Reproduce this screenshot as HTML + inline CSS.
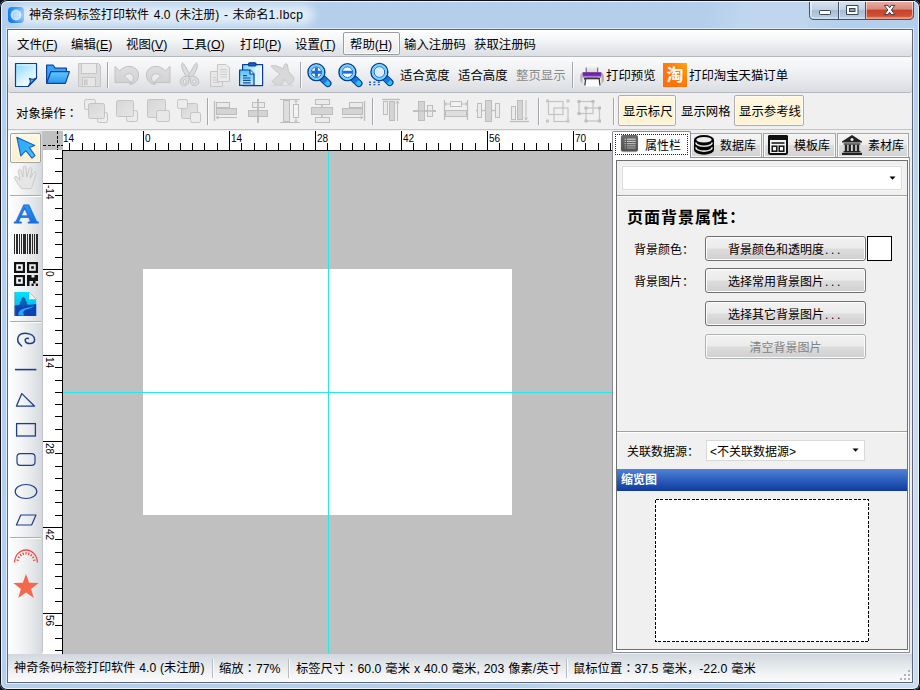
<!DOCTYPE html>
<html lang="zh-CN">
<head>
<meta charset="utf-8">
<title>神奇条码标签打印软件 4.0 (未注册) - 未命名1.lbcp</title>
<style>
*{box-sizing:border-box;margin:0;padding:0}
html,body{width:920px;height:690px;overflow:hidden;background:#0b1322}
body{position:relative;font-family:"Liberation Sans","Noto Sans CJK SC",sans-serif;font-size:12px;color:#000}
.abs,.abs>*{position:absolute}
#win{position:absolute;left:0;top:0;width:920px;height:690px;border-radius:7px;background:#b3cfeb;overflow:hidden;box-shadow:inset 0 0 0 1px #0d1018, inset 0 0 0 2px #eef5fd}
#glass{position:absolute;left:2px;top:2px;width:916px;height:686px;background:linear-gradient(105deg,rgba(255,255,255,0) 0,rgba(255,255,255,0) 64%,rgba(255,255,255,.16) 68%,rgba(255,255,255,.16) 73%,rgba(255,255,255,0) 77%,rgba(255,255,255,0) 84%,rgba(255,255,255,.28) 92%,rgba(255,255,255,.3) 100%)}
#client{position:absolute;left:8px;top:30px;width:904px;height:652px;background:#f0f0f0;box-shadow:0 0 0 1px #5d6877,0 0 0 2px #dbeafa}
.t{position:absolute;white-space:nowrap;line-height:16px;height:16px}
.u{text-decoration:underline}
.serif{font-family:"Liberation Serif","Noto Serif CJK SC",serif}

#menubar{position:absolute;left:0;top:0;width:904px;height:27px;background:linear-gradient(#ffffff 0,#f6f7f8 35%,#e6e8eb 70%,#dcdfe3 100%);border-bottom:1px solid #b4b9c0;border-radius:3px}
#menubar .t{top:7px}
#menubar .t,#tb1 .t,#tb2 .t{font-size:12.4px}
#status .t{font-size:12.3px;word-spacing:.5px;top:6px !important;margin-left:-1px}
#tb1{position:absolute;left:0;top:27px;width:904px;height:36px;background:linear-gradient(#fbfbfc 0,#f0f1f3 40%,#e2e4e8 80%,#d9dce1 100%);border-bottom:1px solid #b4b9c0;border-radius:3px}
#tb2{position:absolute;left:0;top:63px;width:904px;height:37px;background:#f0f0f0;border-bottom:1px solid #c2c5c9}
.sep{position:absolute;width:2px;border-left:1px solid #a3a7ad;border-right:1px solid #fbfbfb}
.tbtn{position:absolute;border:1px solid #adadad;border-radius:2px;background:linear-gradient(#fef7df,#fdf3d2);box-shadow:inset 0 0 0 1px #fffbef}
svg{position:absolute;overflow:visible}
#work{position:absolute;left:0;top:100px;width:904px;height:524px;background:#f0f0f0}
#status{position:absolute;left:0;top:624px;width:904px;height:28px;background:linear-gradient(#d2d8de 0,#e2e6ea 35%,#f2f4f5 72%,#fbfbfc 100%)}
.rl{font-size:10px;line-height:11px;height:11px;font-family:"Liberation Sans",sans-serif}
.rv{transform-origin:0 0;transform:rotate(90deg)}
.pt{font-family:"Liberation Sans","Noto Sans CJK SC",sans-serif;font-size:12px;font-weight:400}
.pbtn{position:absolute;width:161px;height:25px;border:1px solid #707070;border-radius:3px;background:linear-gradient(#f2f2f2 0,#ebebeb 48%,#dddddd 52%,#cfcfcf 100%);box-shadow:inset 0 0 0 1px #fcfcfc;text-align:center;line-height:27px;font-family:"Liberation Sans","Noto Sans CJK SC",sans-serif;font-size:12px;font-weight:400;white-space:nowrap}
.tc{font-family:"Noto Sans CJK TC",sans-serif}
.dots{letter-spacing:2.6px;margin-left:1px}
</style>
</head>
<body>
<div id="win">
<div id="glass"></div>
<!-- TITLE -->
<div id="title" class="abs" style="left:0;top:0;width:920px;height:30px">
  <svg style="left:8px;top:7px" width="16" height="16" viewBox="0 0 16 16"><defs><linearGradient id="ig" x1="0" y1="0" x2="0" y2="1"><stop offset="0" stop-color="#0a86fc"/><stop offset="1" stop-color="#0670ec"/></linearGradient></defs><rect x="0" y="0" width="16" height="16" rx="4" fill="url(#ig)"/><circle cx="8" cy="8" r="5.4" fill="#b4dafd"/><rect x="5" y="4.5" width="1.5" height="7" fill="#8cc4fb"/><rect x="7.3" y="4.5" width="1.5" height="7" fill="#8cc4fb"/><rect x="9.6" y="4.5" width="1.5" height="7" fill="#8cc4fb"/></svg>
  <div style="left:14px;top:5px;width:300px;height:20px;border-radius:10px;background:rgba(255,255,255,.62);filter:blur(5px)"></div>
  <div class="t" id="ttext" style="left:29px;top:7px;word-spacing:1.4px">神奇条码标签打印软件 4.0 (未注册) - 未命名<span style="letter-spacing:.45px">1.lbcp</span></div>
</div>
<div id="client">
<div id="menubar">
  <div class="t" style="left:9px">文件(<span class="u">F</span>)</div>
  <div class="t" style="left:63px">编辑(<span class="u">E</span>)</div>
  <div class="t" style="left:118px">视图(<span class="u">V</span>)</div>
  <div class="t" style="left:174px">工具(<span class="u">O</span>)</div>
  <div class="t" style="left:232px">打印(<span class="u">P</span>)</div>
  <div class="t" style="left:287px">设置(<span class="u">T</span>)</div>
  <div style="position:absolute;left:335px;top:2px;width:57px;height:23px;border:1px solid #9a9da2;border-radius:2px;background:linear-gradient(#fbfbfb,#f3f3f4 50%,#eaebed);box-shadow:inset 0 0 0 1px #fcfcfd"></div>
  <div class="t" style="left:342px">帮助(<span class="u">H</span>)</div>
  <div class="t" style="left:396px">输入注册码</div>
  <div class="t" style="left:466px">获取注册码</div>
</div>
<div id="tb1">
<div class="t" style="left:392px;top:11px">适合宽度</div>
<div class="t" style="left:450px;top:11px">适合高度</div>
<div class="t" style="left:508px;top:11px;color:#8a8a8a">整页显示</div>
<div class="t" style="left:598px;top:11px">打印预览</div>
<div class="t" style="left:681px;top:11px">打印淘宝天猫订单</div>
<div class="sep" style="left:99px;top:5px;height:26px"></div>
<div class="sep" style="left:292px;top:5px;height:26px"></div>
<div class="sep" style="left:564px;top:5px;height:26px"></div>
</div>
<div id="tb2">
<div class="t" style="left:8px;top:12px">对象操作<span class="tc" lang="zh-TW">：</span></div>
<div class="sep" style="left:199px;top:5px;height:27px"></div>
<div class="sep" style="left:364px;top:5px;height:27px"></div>
<div class="sep" style="left:530px;top:5px;height:27px"></div>
<div class="sep" style="left:605px;top:5px;height:27px"></div>
<div class="tbtn" style="left:610px;top:2px;width:58px;height:31px"></div>
<div class="t" style="left:615px;top:11px">显示标尺</div>
<div class="t" style="left:673px;top:11px">显示网格</div>
<div class="tbtn" style="left:726px;top:2px;width:70px;height:31px"></div>
<div class="t" style="left:731px;top:11px">显示参考线</div>
</div>
<div id="work">
<div style="position:absolute;left:0;top:1px;width:35px;height:523px;background:linear-gradient(90deg,#ffffff 0,#f4f5f6 35%,#e3e6e9 75%,#d5d9dd 100%);border-radius:0 0 4px 0;border-right:1px solid #c3c7cc"></div>
<div class="tbtn" style="left:2px;top:3px;width:31px;height:30px;border-color:#a2a2a2;background:linear-gradient(#fef8e2,#fbefcd)"></div>
<div style="position:absolute;left:2px;top:65px;width:31px;height:2px;border-top:1px solid #a9adb2;border-bottom:1px solid #fdfdfd"></div>
<div style="position:absolute;left:2px;top:191px;width:31px;height:2px;border-top:1px solid #a9adb2;border-bottom:1px solid #fdfdfd"></div>
<div style="position:absolute;left:2px;top:407px;width:31px;height:2px;border-top:1px solid #a9adb2;border-bottom:1px solid #fdfdfd"></div>
<div style="position:absolute;left:35px;top:1px;width:20px;height:19px;background:#c0c0c0"></div>
<div style="position:absolute;left:55px;top:1px;width:549px;height:19px;background:#fff"></div>
<div style="position:absolute;left:35px;top:20px;width:19px;height:504px;background:#fff"></div>
<div style="position:absolute;left:54px;top:20px;width:550px;height:504px;background:#c0c0c0;border-left:1px solid #000;border-top:1px solid #000"></div>
<div style="position:absolute;left:135px;top:139px;width:369px;height:246px;background:#fff"></div>
<div style="position:absolute;left:320px;top:21px;width:1px;height:503px;background:#24e8f0"></div>
<div style="position:absolute;left:55px;top:262px;width:549px;height:1px;background:#24e8f0"></div>
<div class="t rl" style="left:55px;top:3px">14</div>
<div class="t rl" style="left:137px;top:3px">0</div>
<div class="t rl" style="left:223px;top:3px">14</div>
<div class="t rl" style="left:309px;top:3px">28</div>
<div class="t rl" style="left:395px;top:3px">42</div>
<div class="t rl" style="left:481px;top:3px">56</div>
<div class="t rl" style="left:567px;top:3px">70</div>
<div class="t rl rv" style="left:47px;top:55px">-14</div>
<div class="t rl rv" style="left:47px;top:141px">0</div>
<div class="t rl rv" style="left:47px;top:227px">14</div>
<div class="t rl rv" style="left:47px;top:313px">28</div>
<div class="t rl rv" style="left:47px;top:399px">42</div>
<div class="t rl rv" style="left:47px;top:485px">56</div>
<div style="position:absolute;left:604px;top:27px;width:298px;height:496px;border:1px solid #898c95;background:#fff"></div>
<div style="position:absolute;left:608px;top:30px;width:292px;height:490px;border:1px solid #6f6f6f;background:#f0f0f0"></div>
<div style="position:absolute;left:682px;top:3px;width:72px;height:24px;border:1px solid #a3a6ad;border-bottom:none;background:linear-gradient(#f4f4f4,#ebebeb 50%,#dddddd 50%,#d3d3d3);box-shadow:inset 0 0 0 1px #f8f8f8"></div>
<div style="position:absolute;left:755px;top:3px;width:73px;height:24px;border:1px solid #a3a6ad;border-bottom:none;background:linear-gradient(#f4f4f4,#ebebeb 50%,#dddddd 50%,#d3d3d3);box-shadow:inset 0 0 0 1px #f8f8f8"></div>
<div style="position:absolute;left:829px;top:3px;width:72px;height:24px;border:1px solid #a3a6ad;border-bottom:none;background:linear-gradient(#f4f4f4,#ebebeb 50%,#dddddd 50%,#d3d3d3);box-shadow:inset 0 0 0 1px #f8f8f8"></div>
<div style="position:absolute;left:604px;top:1px;width:79px;height:27px;border:1px solid #898c95;border-bottom:none;background:#fff;border-radius:2px 2px 0 0"></div>
<div style="position:absolute;left:607px;top:4px;width:73px;height:21px;border:1px dotted #222"></div>
<div class="t pt" style="left:637px;top:8px">属性栏</div>
<div class="t pt" style="left:712px;top:8px">数据库</div>
<div class="t pt" style="left:786px;top:8px">模板库</div>
<div class="t pt" style="left:860px;top:8px">素材库</div>
<div style="position:absolute;left:614px;top:36px;width:280px;height:24px;border:1px solid #dcdcdc;background:#fff;box-shadow:0 0 0 1px #f6f6f6"></div>
<div style="position:absolute;left:609px;top:65px;width:290px;height:2px;border-top:1px solid #a0a0a0;border-bottom:1px solid #fff"></div>
<div class="t" style="left:619px;top:78px;font-size:16px;font-weight:bold;letter-spacing:1px;line-height:20px;height:20px">页面背景属性：</div>
<div class="t pt" style="left:626px;top:112px">背景颜色：</div>
<div class="t pt" style="left:626px;top:144px">背景图片：</div>
<div class="pbtn" style="left:697px;top:106px;border-color:#707070;color:#000">背景颜色和透明度<span class="dots">...</span></div>
<div class="pbtn" style="left:697px;top:138px;border-color:#707070;color:#000">选择常用背景图片<span class="dots">...</span></div>
<div class="pbtn" style="left:697px;top:171px;border-color:#707070;color:#000">选择其它背景图片<span class="dots">...</span></div>
<div class="pbtn" style="left:697px;top:204px;border-color:#adb2b5;color:#838383">清空背景图片</div>
<div style="position:absolute;left:859px;top:106px;width:25px;height:25px;border:1px solid #000;background:#fff"></div>
<div style="position:absolute;left:609px;top:301px;width:290px;height:2px;border-top:1px solid #a0a0a0;border-bottom:1px solid #fff"></div>
<div class="t pt" style="left:619px;top:314px">关联数据源：</div>
<div style="position:absolute;left:698px;top:310px;width:159px;height:21px;border:1px solid #d9d9d9;background:#fff"></div>
<div class="t pt" style="left:702px;top:314px">&lt;不关联数据源&gt;</div>
<div style="position:absolute;left:609px;top:339px;width:290px;height:22px;background:linear-gradient(#5182d6 0,#2f62c0 45%,#0f3a9c 100%)"></div>
<div class="t pt" style="left:613px;top:342px;color:#fff;font-weight:bold">缩览图</div>
<div style="position:absolute;left:647px;top:369px;width:214px;height:143px;background:#fff"></div>
</div>
<div id="status">
<div class="t" style="left:7px;top:8px;font-size:12.15px">神奇条码标签打印软件 4.0 (未注册)</div>
<div class="t" style="left:212px;top:8px">缩放<span class="tc" lang="zh-TW">：</span>77%</div>
<div class="t" style="left:289px;top:8px">标签尺寸<span class="tc" lang="zh-TW">：</span>60.0 毫米 x 40.0 毫米, 203 像素/英寸</div>
<div class="t" style="left:566px;top:8px">鼠标位置<span class="tc" lang="zh-TW">：</span>37.5 毫米，-22.0 毫米</div>
<div class="sep" style="left:204px;top:5px;height:19px;border-left-color:#b8bcc2"></div>
<div class="sep" style="left:280px;top:5px;height:19px;border-left-color:#b8bcc2"></div>
<div class="sep" style="left:558px;top:5px;height:19px;border-left-color:#b8bcc2"></div>
<div style="position:absolute;left:892px;top:24px;width:2px;height:2px;background:#b0b4b9"></div><div style="position:absolute;left:896px;top:24px;width:2px;height:2px;background:#b0b4b9"></div><div style="position:absolute;left:900px;top:24px;width:2px;height:2px;background:#b0b4b9"></div><div style="position:absolute;left:896px;top:20px;width:2px;height:2px;background:#b0b4b9"></div><div style="position:absolute;left:900px;top:20px;width:2px;height:2px;background:#b0b4b9"></div><div style="position:absolute;left:900px;top:16px;width:2px;height:2px;background:#b0b4b9"></div>
</div>
</div>
<svg id="ov" width="920" height="690" viewBox="0 0 920 690" style="left:0;top:0;pointer-events:none"><defs>
<linearGradient id="gCapB" x1="0" y1="0" x2="0" y2="1"><stop offset="0" stop-color="#dbe5f1"/><stop offset="0.48" stop-color="#c3d1e3"/><stop offset="0.5" stop-color="#a7bbd3"/><stop offset="1" stop-color="#c0d2e6"/></linearGradient>
<linearGradient id="gCapR" x1="0" y1="0" x2="0" y2="1"><stop offset="0" stop-color="#eeb3a9"/><stop offset="0.46" stop-color="#d78a7e"/><stop offset="0.5" stop-color="#c8412a"/><stop offset="0.8" stop-color="#cf5236"/><stop offset="1" stop-color="#e08e6e"/></linearGradient>
<clipPath id="capClip"><path d="M810 0H913V15.5Q913 19.5 909 19.5H814Q810 19.5 810 15.5Z"/></clipPath>
<linearGradient id="gProp" x1="0" y1="0" x2="0" y2="1"><stop offset="0" stop-color="#6a6a6a"/><stop offset="1" stop-color="#505050"/></linearGradient>

<linearGradient id="gNew" x1="0" y1="0" x2="0.6" y2="1"><stop offset="0" stop-color="#86d8fc"/><stop offset="0.55" stop-color="#c9eefe"/><stop offset="1" stop-color="#ffffff"/></linearGradient>
<linearGradient id="gFold" x1="0" y1="0" x2="0" y2="1"><stop offset="0" stop-color="#62c8fc"/><stop offset="1" stop-color="#2896ee"/></linearGradient>
<linearGradient id="gDis" x1="0" y1="0" x2="0" y2="1"><stop offset="0" stop-color="#dedede"/><stop offset="1" stop-color="#d0d0d0"/></linearGradient>
<linearGradient id="gPaste" x1="0" y1="0" x2="1" y2="0"><stop offset="0" stop-color="#7fd6fc"/><stop offset="1" stop-color="#f4fbff"/></linearGradient>
<linearGradient id="gPaste2" x1="0" y1="0" x2="0" y2="1"><stop offset="0" stop-color="#4fc3fa"/><stop offset="1" stop-color="#c9eefe"/></linearGradient>
<linearGradient id="gTao" x1="0" y1="1" x2="1" y2="0"><stop offset="0" stop-color="#ff6a0a"/><stop offset="0.6" stop-color="#ff7e0a"/><stop offset="1" stop-color="#ffa514"/></linearGradient>
<linearGradient id="gPr" x1="0" y1="0" x2="0" y2="1"><stop offset="0" stop-color="#5c1a90"/><stop offset="0.55" stop-color="#7c30b4"/><stop offset="0.72" stop-color="#b880e2"/><stop offset="0.85" stop-color="#9a5cc8"/><stop offset="1" stop-color="#6a3a90"/></linearGradient>
<linearGradient id="gPrP" x1="0" y1="0" x2="0" y2="1"><stop offset="0" stop-color="#ffffff"/><stop offset="1" stop-color="#d4d4d4"/></linearGradient>
<linearGradient id="gPrB" x1="0" y1="0" x2="1" y2="0"><stop offset="0" stop-color="#9a9a9a"/><stop offset="0.12" stop-color="#ececec"/><stop offset="0.88" stop-color="#ececec"/><stop offset="1" stop-color="#8a8a8a"/></linearGradient>
<linearGradient id="gDis2" x1="0" y1="0" x2="1" y2="1"><stop offset="0" stop-color="#d6d6d6"/><stop offset="1" stop-color="#e6e6e6"/></linearGradient>
<linearGradient id="gArrow" x1="0" y1="0" x2="1" y2="1"><stop offset="0" stop-color="#2ba6f6"/><stop offset="0.5" stop-color="#35b0f8"/><stop offset="1" stop-color="#54c4fb"/></linearGradient>
<linearGradient id="gA" x1="0" y1="0" x2="0" y2="1"><stop offset="0" stop-color="#3aa6f5"/><stop offset="1" stop-color="#0a5fd8"/></linearGradient>
<linearGradient id="gPic" x1="0" y1="0" x2="0" y2="1"><stop offset="0" stop-color="#00e4ff"/><stop offset="0.5" stop-color="#05c4f4"/><stop offset="1" stop-color="#0a9ae8"/></linearGradient>

</defs>
<g clip-path="url(#capClip)"><rect x="810" y="0" width="56" height="20" fill="url(#gCapB)"/><rect x="865" y="0" width="48" height="20" fill="url(#gCapR)"/></g>
<path d="M810.5 0V15.5Q810.5 19 814 19H909Q912.5 19 912.5 15.5V0" fill="none" stroke="#ffffff" stroke-opacity=".55" stroke-width="1" transform="translate(0 -1)"/>
<path d="M809.5 0V15.5Q809.5 19.5 814 19.5H909Q913.5 19.5 913.5 15.5V0M838.5 1V19M865.5 1V19" fill="none" stroke="#46536a" stroke-width="1"/>
<path d="M839.5 1V18.5M866.5 1V18.5M811.5 1V15" fill="none" stroke="#ffffff" stroke-opacity=".5" stroke-width="1"/>
<rect x="819.5" y="10.5" width="11" height="4" rx=".8" fill="#fff" stroke="#3b4759" stroke-width="1"/>
<path d="M846.5 5.5H858V14.5H846.5Z" fill="#fff" stroke="#3b4759" stroke-width="1" stroke-linejoin="round"/><rect x="849.5" y="8.5" width="5.5" height="3" fill="#8ea2bc" stroke="#3b4759" stroke-width="1"/>
<path d="M884.4 5.4H888L889.6 7.8L891.2 5.4H894.8L891.4 10L894.8 14.6H891.2L889.6 12.2L888 14.6H884.4L887.8 10Z" fill="#fff" stroke="#3b3f52" stroke-width="1" stroke-linejoin="round"/>
<path d="M808 0.5H915" stroke="#0d1018" stroke-width="1"/><path d="M808 1.5H915" stroke="#f4f8fd" stroke-width="1"/>
<path d="M889.5 176.5H895.5L892.5 179.8Z" fill="#000"/>
<path d="M852.5 448.5H858.5L855.5 451.8Z" fill="#000"/>
<rect x="655.5" y="499.5" width="213" height="142" fill="none" stroke="#000" stroke-width="1" stroke-dasharray="3 1.5" shape-rendering="crispEdges"/>
<rect x="620.6" y="135.4" width="17.6" height="17" rx="2.4" fill="#8a8a8a" opacity=".35"/><rect x="621" y="135" width="17" height="16.4" rx="2" fill="url(#gProp)"/><rect x="627" y="138.6" width="8.6" height="1.2" fill="#cfcfcf" opacity="1.00"/><rect x="624.6" y="138.6" width="1.4" height="1.2" fill="#bdbdbd" opacity="1.00"/><rect x="627" y="140.8" width="8.6" height="1.2" fill="#cfcfcf" opacity="0.90"/><rect x="624.6" y="140.8" width="1.4" height="1.2" fill="#bdbdbd" opacity="0.90"/><rect x="627" y="143.0" width="8.6" height="1.2" fill="#cfcfcf" opacity="0.80"/><rect x="624.6" y="143.0" width="1.4" height="1.2" fill="#bdbdbd" opacity="0.80"/><rect x="627" y="145.2" width="8.6" height="1.2" fill="#cfcfcf" opacity="0.70"/><rect x="624.6" y="145.2" width="1.4" height="1.2" fill="#bdbdbd" opacity="0.70"/><rect x="627" y="147.4" width="8.6" height="1.2" fill="#cfcfcf" opacity="0.60"/><rect x="624.6" y="147.4" width="1.4" height="1.2" fill="#bdbdbd" opacity="0.60"/>
<path d="M694 139.8A10 4.8 0 0 1 714 139.8V149.9A10 4.8 0 0 1 694 149.9Z" fill="#050505"/><ellipse cx="704" cy="139.8" rx="7.7" ry="2.8" fill="#ececec"/><path d="M696 143A8 3.3 0 0 0 712 143" fill="none" stroke="#dedede" stroke-width="1.6" stroke-linecap="round"/><path d="M696 147.8A8 3.3 0 0 0 712 147.8" fill="none" stroke="#dedede" stroke-width="1.6" stroke-linecap="round"/>
<rect x="769" y="136" width="18" height="18" rx="1.5" fill="#f4f4f4" stroke="#111" stroke-width="2"/><rect x="768" y="135" width="20" height="5" rx="1.5" fill="#111"/><path d="M771.5 143H784.5" stroke="#111" stroke-width="1.6"/><rect x="772.2" y="146.2" width="4.6" height="5" fill="none" stroke="#111" stroke-width="1.5"/><rect x="779.2" y="146.2" width="4.6" height="5" fill="none" stroke="#111" stroke-width="1.5"/>
<g fill="#222"><path d="M852 135L862 141.4V142.6H842V141.4Z"/><circle cx="852" cy="139.6" r="1.5" fill="#eee"/><rect x="843.6" y="143.4" width="16.8" height="1.2"/><rect x="844.8" y="144.6" width="2.4" height="6.4"/><rect x="848.6" y="144.6" width="2.4" height="6.4"/><rect x="852.8" y="144.6" width="2.4" height="6.4"/><rect x="856.8" y="144.6" width="2.4" height="6.4"/><rect x="843.6" y="151" width="16.8" height="1.4"/><rect x="842" y="152.8" width="20" height="2.2"/></g>
<g><path d="M15.5 63.5H36.5V78L28 86.5H15.5Z" fill="url(#gNew)" stroke="#0b3f94" stroke-width="1.2" stroke-linejoin="round"/><path d="M17 65H35V78" fill="none" stroke="#e9f8ff" stroke-width="1" opacity=".9"/><path d="M28 86.5C30.6 83.6 30.8 80.4 29.4 78.4C32.4 79.6 35 79.2 36.5 78Z" fill="#49b4f6" stroke="#0b3f94" stroke-width="1.1" stroke-linejoin="round"/></g>
<g stroke="#0b47a0" stroke-width="1.2" stroke-linejoin="round"><path d="M46.6 83.4V65.2H53L55.2 68.2H66.4V71.6H50.8Z" fill="#3aa4f2"/><path d="M46.6 83.4L51 71.6H69.4L65.4 83.4Z" fill="url(#gFold)"/></g>
<g stroke="#c6c6c6" stroke-width="1" fill="#e2e2e2"><path d="M78.5 63.5H98.5L100.5 65.5V86.5H78.5Z" fill="#dcdcdc"/><rect x="81.5" y="63.5" width="15" height="10" fill="#ebebeb"/><rect x="82.5" y="77.5" width="13" height="9" fill="#e6e6e6"/><rect x="84.5" y="80" width="2.5" height="4.5" fill="#d6d6d6"/></g>
<path d="M115 66.4V82.6H131.2L129.6 84.4C134.6 84.2 138.6 80.2 138.6 75C138.6 69.2 133.2 66 128 66.4C124.2 66.8 121.6 68.8 119.6 70.8ZM124.6 76.2C126.4 72.8 133.2 72.6 133.4 78C133.4 80 132.6 81.6 131.2 82.6Z" fill="url(#gDis)" fill-rule="evenodd" stroke="#c2c2c2" stroke-width="1" stroke-linejoin="round"/>
<g transform="translate(285 0) scale(-1 1)"><path d="M115 66.4V82.6H131.2L129.6 84.4C134.6 84.2 138.6 80.2 138.6 75C138.6 69.2 133.2 66 128 66.4C124.2 66.8 121.6 68.8 119.6 70.8ZM124.6 76.2C126.4 72.8 133.2 72.6 133.4 78C133.4 80 132.6 81.6 131.2 82.6Z" fill="url(#gDis)" fill-rule="evenodd" stroke="#c2c2c2" stroke-width="1" stroke-linejoin="round"/></g>
<g fill="#dcdcdc" stroke="#c0c0c0" stroke-width="1" stroke-linejoin="round"><path d="M182.4 62.8C180.6 66 182 70.5 187.6 78L190.4 75.4C187.4 70 185 65 182.4 62.8Z"/><path d="M196.6 62.8C198.4 66 197 70.5 191.4 78L188.6 75.4C191.6 70 194 65 196.6 62.8Z"/><path d="M187.8 76.2C184.6 75.6 180.4 77.6 180.2 81.6C180 85.8 186 87.4 188 83.4C189 81.4 189.2 78.4 189.4 76.8Z"/><path d="M191.2 76.2C194.4 75.6 198.6 77.6 198.8 81.6C199 85.8 193 87.4 191 83.4C190 81.4 189.8 78.4 189.6 76.8Z"/><ellipse cx="184.6" cy="81.6" rx="1.5" ry="2" fill="#f0f0f0"/><ellipse cx="194.4" cy="81.6" rx="1.5" ry="2" fill="#f0f0f0"/></g>
<g stroke="#c6c6c6" stroke-width="1" fill="#e6e6e6"><path d="M210.5 71.5H218.5L222.5 75.5V86.5H210.5Z"/><path d="M217.5 64.5H226L229.5 68V81.5H217.5Z" fill="#ebebeb"/><path d="M220 69.5H227M220 72H227M220 74.5H227M220 77H227M213 77.5H216M213 80H217M213 82.5H219" stroke="#cdcdcd"/></g>
<g stroke="#0b3f94" stroke-width="1.2" stroke-linejoin="round"><rect x="242.6" y="64.6" width="20" height="21" fill="url(#gPaste)"/><path d="M256 66V84" stroke="#ffffff" stroke-width="1" opacity=".8"/><rect x="248.6" y="62.8" width="7.4" height="3.2" rx="1" fill="#1761c4"/><path d="M239.6 70H250L254 74V85.4H239.6Z" fill="url(#gPaste2)"/><path d="M250 70V74H254" fill="#dff4fe"/><path d="M243 75.6H247M243 78H250.6M243 80.4H250.6M243 82.8H250.6" stroke="#0f4aa6" stroke-width="1.2"/></g>
<path d="M271 66C274 64.6 279 66.4 283.2 69L284.6 64.6C285.2 63.2 287 63.4 287.4 65L288.6 71.6C291 74 293.4 76.6 293.8 78.6C293.6 81.6 291.4 84 289 84.6C287.4 83 285.4 80.6 284.4 79.2C283.6 81.4 282.4 83.8 281 85C278 86 274 84.4 272.4 81C275 78.4 278 76 279.8 74.2C277 71.6 273 69.4 271 66Z" fill="#d8d8d8" stroke="#c6c6c6" stroke-width="1" stroke-linejoin="round"/><path d="M271 85.6H294" stroke="#d2d4d6" stroke-width="1"/>
<g><path d="M323.4 79.2L327.8 83.4" stroke="#0b3f94" stroke-width="7.4" stroke-linecap="round"/><path d="M323.4 79.2L327.8 83.4" stroke="#2fc2f9" stroke-width="5" stroke-linecap="round"/><path d="M322.4 78.2L326.0 81.8" stroke="#1577e4" stroke-width="5"/><circle cx="316.4" cy="72.2" r="8.4" fill="#f4fbff" stroke="#0b3f94" stroke-width="1.5"/><circle cx="316.4" cy="72.2" r="6.7" fill="none" stroke="#66d6fc" stroke-width="1.9"/><circle cx="316.4" cy="72.2" r="5.3" fill="none" stroke="#1d62c6" stroke-width="1"/><path d="M316.4 67.6V76.8M311.8 72.2H321" stroke="#1a6be0" stroke-width="3"/></g>
<g><path d="M354.4 79.2L358.8 83.4" stroke="#0b3f94" stroke-width="7.4" stroke-linecap="round"/><path d="M354.4 79.2L358.8 83.4" stroke="#2fc2f9" stroke-width="5" stroke-linecap="round"/><path d="M353.4 78.2L357.0 81.8" stroke="#1577e4" stroke-width="5"/><circle cx="347.4" cy="72.2" r="8.4" fill="#f4fbff" stroke="#0b3f94" stroke-width="1.5"/><circle cx="347.4" cy="72.2" r="6.7" fill="none" stroke="#66d6fc" stroke-width="1.9"/><circle cx="347.4" cy="72.2" r="5.3" fill="none" stroke="#1d62c6" stroke-width="1"/><path d="M342.6 72.2H352.2" stroke="#1a6be0" stroke-width="2.8"/></g>
<g><path d="M386.4 79.0L389.8 82.4" stroke="#0b3f94" stroke-width="7.4" stroke-linecap="round"/><path d="M386.4 79.0L389.8 82.4" stroke="#2fc2f9" stroke-width="5" stroke-linecap="round"/><path d="M385.4 78.0L389.0 81.6" stroke="#1577e4" stroke-width="5"/><circle cx="379.4" cy="72.0" r="8.4" fill="#f4fbff" stroke="#0b3f94" stroke-width="1.5"/><circle cx="379.4" cy="72.0" r="6.7" fill="none" stroke="#66d6fc" stroke-width="1.9"/><circle cx="379.4" cy="72.0" r="5.3" fill="none" stroke="#1d62c6" stroke-width="1"/><circle cx="379.4" cy="72" r="4" fill="#dcebfb"/><path d="M370 81.6V85.2M374.4 81.6V85.2M378.8 81.6V85.2" stroke="#1d62c6" stroke-width="2" stroke-dasharray="1.5 0.8"/></g>
<g><path d="M580.5 76Q580.5 72.6 584 72.6H600Q603.5 72.6 603.5 76V80Q603.5 83.2 600.5 83.2H583.5Q580.5 83.2 580.5 80Z" fill="url(#gPrB)"/><rect x="586.4" y="64.2" width="11" height="8.6" fill="url(#gPrP)"/><path d="M586.2 67.6V72.4M597.7 67.6V72.4" stroke="#5a5a5a" stroke-width="1"/><path d="M582.6 72.2H601.4V77.6Q592 79 582.6 77.6Z" fill="url(#gPr)"/><rect x="584" y="78" width="16" height="1.6" fill="#3a3a3a"/><path d="M586.4 79.6H598.4L599 86.6H585.8Z" fill="#fbfbfb"/><path d="M585.6 79.4L584.8 85.4M599.2 79.4L600 85.4" stroke="#2a2a2a" stroke-width="1.1"/></g>
<rect x="663" y="63" width="24" height="24" fill="url(#gTao)"/><text x="675" y="81.4" font-size="17" font-weight="bold" fill="#fff" text-anchor="middle" font-family="'Liberation Sans','Noto Sans CJK SC',sans-serif">淘</text>
<rect x="84.5" y="99.5" width="11.0" height="10.0" rx="1.8" fill="#ececec" stroke="#c4c4c4" stroke-width="1"/><rect x="97.5" y="112.5" width="10.0" height="10.0" rx="1.8" fill="#ececec" stroke="#c4c4c4" stroke-width="1"/><rect x="88.5" y="103.5" width="16.0" height="15.0" rx="1.8" fill="url(#gDis2)" stroke="#c4c4c4" stroke-width="1"/>
<rect x="126.5" y="110.5" width="11.0" height="11.0" rx="1.8" fill="#ececec" stroke="#c4c4c4" stroke-width="1"/><rect x="116.5" y="100.5" width="17.0" height="16.0" rx="1.8" fill="url(#gDis2)" stroke="#c4c4c4" stroke-width="1"/>
<rect x="147.5" y="99.5" width="18.0" height="18.0" rx="1.8" fill="url(#gDis2)" stroke="#c4c4c4" stroke-width="1"/><rect x="156.5" y="110.5" width="13.0" height="11.0" rx="1.8" fill="#e8e8e8" stroke="#c4c4c4" stroke-width="1"/>
<rect x="181.5" y="103.5" width="16.0" height="15.0" rx="1.8" fill="url(#gDis2)" stroke="#c4c4c4" stroke-width="1"/><rect x="177.5" y="99.5" width="10.0" height="9.0" rx="1.8" fill="#ececec" stroke="#c4c4c4" stroke-width="1"/><rect x="190.5" y="112.5" width="10.0" height="10.0" rx="1.8" fill="#ececec" stroke="#c4c4c4" stroke-width="1"/>
<path d="M214.5 101V121" stroke="#bdbdbd" stroke-width="1.4" fill="none"/><rect x="216.5" y="102.5" width="13.0" height="5.0" fill="#ebebeb" stroke="#bdbdbd" stroke-width="1"/><rect x="216.5" y="108.5" width="20.0" height="6.0" fill="#d4d4d4" stroke="#bdbdbd" stroke-width="1"/><path d="M216 117.5H237M216 117.5L218.5 116M216 117.5L218.5 119" stroke="#bdbdbd" stroke-width="1" fill="none"/>
<path d="M258 99V123" stroke="#bdbdbd" stroke-width="1.8" fill="none"/><rect x="252.5" y="102.5" width="12.0" height="5.0" fill="#ebebeb" stroke="#bdbdbd" stroke-width="1"/><rect x="248.5" y="110.5" width="19.0" height="6.0" fill="#d4d4d4" stroke="#bdbdbd" stroke-width="1"/><path d="M258 99V123" stroke="#bdbdbd" stroke-width="1.6" fill="none"/>
<path d="M280 99.5H300M280 122.5H300" stroke="#bdbdbd" stroke-width="1.2" fill="none"/><rect x="283.5" y="100.5" width="6.0" height="21.0" fill="#dedede" stroke="#bdbdbd" stroke-width="1"/><rect x="293.5" y="104.5" width="5.0" height="13.0" fill="#f2f2f2" stroke="#bdbdbd" stroke-width="1"/><path d="M296 100V104M296 118V122M294.5 102L296 100.5L297.5 102M294.5 120.5L296 122L297.5 120.5" stroke="#bdbdbd" stroke-width="1" fill="none"/>
<path d="M322 99V123" stroke="#bdbdbd" stroke-width="1.6" fill="none"/><rect x="315.5" y="99.5" width="14.0" height="5.0" fill="#ebebeb" stroke="#bdbdbd" stroke-width="1"/><rect x="311.5" y="107.5" width="21.0" height="7.0" fill="#d4d4d4" stroke="#bdbdbd" stroke-width="1"/><rect x="315.5" y="117.5" width="14.0" height="5.0" fill="#ebebeb" stroke="#bdbdbd" stroke-width="1"/>
<path d="M364.5 101V121" stroke="#bdbdbd" stroke-width="1.4" fill="none"/><rect x="349.5" y="102.5" width="13.0" height="5.0" fill="#ebebeb" stroke="#bdbdbd" stroke-width="1"/><rect x="342.5" y="108.5" width="20.0" height="6.0" fill="#d4d4d4" stroke="#bdbdbd" stroke-width="1"/><path d="M342 117.5H363M363 117.5L360.5 116M363 117.5L360.5 119" stroke="#bdbdbd" stroke-width="1" fill="none"/>
<path d="M382 99.5H400" stroke="#bdbdbd" stroke-width="1.4" fill="none"/><rect x="383.5" y="101.5" width="4.0" height="13.0" fill="#ebebeb" stroke="#bdbdbd" stroke-width="1"/><rect x="389.5" y="101.5" width="5.0" height="19.0" fill="#d4d4d4" stroke="#bdbdbd" stroke-width="1"/><path d="M397.5 101V121M397.5 101L396 103.5M397.5 101L399 103.5" stroke="#bdbdbd" stroke-width="1" fill="none"/>
<path d="M413 111H436" stroke="#bdbdbd" stroke-width="1.8" fill="none"/><rect x="418.5" y="101.5" width="6.0" height="19.0" fill="#d4d4d4" stroke="#bdbdbd" stroke-width="1"/><rect x="427.5" y="105.5" width="5.0" height="11.0" fill="#ebebeb" stroke="#bdbdbd" stroke-width="1"/><path d="M413 111H436" stroke="#bdbdbd" stroke-width="1.4" fill="none"/>
<path d="M444.5 100V120M467.5 100V120" stroke="#bdbdbd" stroke-width="1.2" fill="none"/><rect x="450.5" y="101.5" width="11.0" height="5.0" fill="#f2f2f2" stroke="#bdbdbd" stroke-width="1"/><path d="M445 104H450M462 104H467M446.5 102.5L445 104L446.5 105.5M465.5 102.5L467 104L465.5 105.5" stroke="#bdbdbd" stroke-width="1" fill="none"/><rect x="445.5" y="110.5" width="21.0" height="6.0" fill="#dedede" stroke="#bdbdbd" stroke-width="1"/>
<path d="M476 110.5H500" stroke="#bdbdbd" stroke-width="1.4" fill="none"/><rect x="477.5" y="103.5" width="4.0" height="14.0" fill="#ebebeb" stroke="#bdbdbd" stroke-width="1"/><rect x="485.5" y="100.5" width="6.0" height="21.0" fill="#d4d4d4" stroke="#bdbdbd" stroke-width="1"/><rect x="495.5" y="103.5" width="4.0" height="14.0" fill="#ebebeb" stroke="#bdbdbd" stroke-width="1"/>
<path d="M510 121.5H529" stroke="#bdbdbd" stroke-width="1.4" fill="none"/><rect x="511.5" y="106.5" width="4.0" height="13.0" fill="#ebebeb" stroke="#bdbdbd" stroke-width="1"/><rect x="517.5" y="100.5" width="5.0" height="19.0" fill="#d4d4d4" stroke="#bdbdbd" stroke-width="1"/><path d="M526 100V120M526 120L524.5 117.5M526 120L527.5 117.5" stroke="#bdbdbd" stroke-width="1" fill="none"/>
<g fill="none" stroke="#c4c4c4" stroke-width="1.2"><rect x="548.5" y="101.5" width="14.5" height="13"/><rect x="554" y="108" width="14" height="13.5"/></g><rect x="546.0" y="99.5" width="3" height="3" fill="#c6c6c6"/><rect x="566.5" y="99.5" width="3" height="3" fill="#c6c6c6"/><rect x="546.0" y="119.5" width="3" height="3" fill="#c6c6c6"/><rect x="566.5" y="119.5" width="3" height="3" fill="#c6c6c6"/>
<g fill="none" stroke="#c4c4c4" stroke-width="1.2"><rect x="579" y="101.5" width="14" height="12"/><rect x="586" y="108" width="13.5" height="13"/></g><rect x="577.5" y="100.0" width="3" height="3" fill="#bcbcbc"/><rect x="591.5" y="100.0" width="3" height="3" fill="#bcbcbc"/><rect x="577.5" y="112.0" width="3" height="3" fill="#bcbcbc"/><rect x="584.5" y="106.5" width="3" height="3" fill="#bcbcbc"/><rect x="598.0" y="106.5" width="3" height="3" fill="#bcbcbc"/><rect x="584.5" y="119.5" width="3" height="3" fill="#bcbcbc"/><rect x="598.0" y="119.5" width="3" height="3" fill="#bcbcbc"/>
<path d="M16.8 137.2L34.8 145.6L29.4 147.6L35 155.6L32 158.2L25.8 150.6L20.8 155.8Z" fill="url(#gArrow)" stroke="#1462c4" stroke-width="1.1" stroke-linejoin="round"/>
<path d="M21.4 188.6C19 185.4 16.4 181.6 14.6 178.6C13.8 177 15.6 175.8 17 177L20 180.2L18.4 171.2C18 169.2 20.4 168.6 21 170.6L23 177L23.2 167.6C23.2 165.6 25.8 165.6 26 167.6L26.8 177L29.2 168.6C29.8 166.8 32 167.4 31.8 169.4L30.4 178.2L33.6 172.6C34.6 171 36.6 172 36 173.8C34.6 178 33.6 182 32.4 185.4C32 187 31.6 188 31.2 188.6Z" fill="#e6e6e6" stroke="#c9c9c9" stroke-width="1" stroke-linejoin="round"/>
<text transform="translate(26 223.4) scale(1.2 1)" x="0" y="0" font-size="28" font-weight="bold" text-anchor="middle" fill="url(#gA)" stroke="#1a6fe0" stroke-width="0.9" font-family="'Liberation Serif',serif">A</text>
<g fill="#2a2a2a" shape-rendering="crispEdges"><rect x="14.0" y="234" width="1.0" height="20"/><rect x="16.0" y="234" width="2.0" height="20"/><rect x="19.0" y="234" width="1.0" height="20"/><rect x="21.0" y="234" width="1.0" height="20"/><rect x="23.0" y="234" width="3.0" height="20"/><rect x="27.0" y="234" width="1.0" height="20"/><rect x="29.0" y="234" width="2.0" height="20"/><rect x="32.0" y="234" width="1.0" height="20"/><rect x="34.0" y="234" width="1.0" height="20"/><rect x="36.0" y="234" width="2.0" height="20"/></g>
<g fill="none" stroke="#111" stroke-width="2.2"><rect x="15.1" y="263.1" width="8.8" height="8.8"/><rect x="28.1" y="263.1" width="8.8" height="8.8"/><rect x="15.1" y="276.1" width="8.8" height="8.8"/></g><g fill="#111"><rect x="18.2" y="266.2" width="2.6" height="2.6"/><rect x="31.2" y="266.2" width="2.6" height="2.6"/><rect x="18.2" y="279.2" width="2.6" height="2.6"/><path d="M27 275H31.5V277.5H34.5V275H38V281H35.5V283.5H33V281H29.5V286H27Z"/><rect x="31.5" y="283.6" width="2.2" height="2.4"/><rect x="35.8" y="283.6" width="2.2" height="2.4"/></g>
<g><path d="M14.6 292H29L36.2 299.2V316H14.6Z" fill="url(#gPic)"/><path d="M14.6 305.6C20 304.6 27 305.4 36.2 304V316H14.6Z" fill="#0a44b4"/><path d="M29 292V299.2H36.2Z" fill="#f2f8fd"/><path d="M29 292L36.2 299.2" stroke="#7fa8c8" stroke-width=".6"/><path d="M23.4 296.4L26 299.8H25L27.4 302.8H26.2L28.6 305.6H24.2V307H22.6V305.6H18.2L20.6 302.8H19.4L21.8 299.8H20.8Z" fill="#0a5cb4"/><path d="M18.6 315.4C17.6 311.6 21 308.8 26 308C29 307.6 32 307 33.6 305.8C32.6 308 29 308.8 26.4 309.6C23 310.6 22.4 313 24.6 315.4Z" fill="#27a8f4"/><path d="M14.9 292V316" stroke="#8a8078" stroke-width=".6"/></g>
<path d="M21.6 346C18.6 343.6 16.8 340 18.2 337C19.6 334 23.6 333.1 27 333.4C31 333.8 34.6 336 34.6 339.6C34.6 342.4 32.6 343.6 30 343.6C27.4 343.6 25.4 342.4 25.2 340.4C25 338.8 26.4 338 28.4 338.4" fill="none" stroke="#1d3f8a" stroke-width="1.5" stroke-linecap="round"/>
<path d="M15 369.6H36.4" stroke="#1d3f8a" stroke-width="1.6"/>
<path d="M21.8 393.6L34.6 406.2H16.4Z" fill="none" stroke="#1d3f8a" stroke-width="1.3" stroke-linejoin="round"/>
<rect x="16.6" y="423.6" width="18.8" height="12.4" fill="none" stroke="#1d3f8a" stroke-width="1.3"/>
<rect x="17" y="453.6" width="18" height="11.8" rx="3.4" fill="none" stroke="#1d3f8a" stroke-width="1.2"/>
<ellipse cx="26" cy="491.5" rx="10.8" ry="7" fill="none" stroke="#1d3f8a" stroke-width="1.2"/>
<path d="M20.8 515H36L31.6 525H16.4Z" fill="none" stroke="#1d3f8a" stroke-width="1.2" stroke-linejoin="round"/>
<path d="M14.6 562.4A11.4 12.4 0 0 1 37.4 562.4" fill="none" stroke="#f04a44" stroke-width="1.3"/><path d="M18.9 560.5L16.5 559.8M19.8 558.1L17.9 556.7M21.5 556.2L20.0 554.1M23.6 555.0L22.8 552.5M26.0 554.5L26.0 551.9M28.4 555.0L29.2 552.5M30.5 556.2L32.0 554.1M32.2 558.1L34.1 556.7M33.1 560.5L35.5 559.8" stroke="#f04a44" stroke-width="1.2" fill="none"/>
<path d="M26.0 574.0L29.2 582.8L38.6 583.1L31.1 588.9L33.8 597.9L26.0 592.6L18.2 597.9L20.9 588.9L13.4 583.1L22.8 582.8Z" fill="#f4694b"/>
<path d="M69.5 143V150M82.5 143V150M94.5 143V150M106.5 143V150M118.5 143V150M131.5 143V150M143.5 131V150M155.5 143V150M168.5 143V150M180.5 143V150M192.5 143V150M204.5 143V150M217.5 143V150M229.5 131V150M241.5 143V150M254.5 143V150M266.5 143V150M278.5 143V150M290.5 143V150M303.5 143V150M315.5 131V150M327.5 143V150M340.5 143V150M352.5 143V150M364.5 143V150M376.5 143V150M389.5 143V150M401.5 131V150M413.5 143V150M426.5 143V150M438.5 143V150M450.5 143V150M462.5 143V150M475.5 143V150M487.5 131V150M499.5 143V150M512.5 143V150M524.5 143V150M536.5 143V150M548.5 143V150M561.5 143V150M573.5 131V150M585.5 143V150M598.5 143V150M610.5 143V150" stroke="#000" stroke-width="1" fill="none" shape-rendering="crispEdges"/>
<path d="M55 158.5H62M55 171.5H62M43 183.5H62M55 195.5H62M55 208.5H62M55 220.5H62M55 232.5H62M55 244.5H62M55 257.5H62M43 269.5H62M55 281.5H62M55 294.5H62M55 306.5H62M55 318.5H62M55 330.5H62M55 343.5H62M43 355.5H62M55 367.5H62M55 380.5H62M55 392.5H62M55 404.5H62M55 416.5H62M55 429.5H62M43 441.5H62M55 453.5H62M55 466.5H62M55 478.5H62M55 490.5H62M55 502.5H62M55 515.5H62M43 527.5H62M55 539.5H62M55 552.5H62M55 564.5H62M55 576.5H62M55 588.5H62M55 601.5H62M43 613.5H62M55 625.5H62M55 638.5H62M55 650.5H62" stroke="#000" stroke-width="1" fill="none" shape-rendering="crispEdges"/>
<path d="M57.5 131V150M43 145.5H63" stroke="#000" stroke-width="1" stroke-dasharray="3 1.5" fill="none" shape-rendering="crispEdges"/>
</svg>
</div>
</body>
</html>
